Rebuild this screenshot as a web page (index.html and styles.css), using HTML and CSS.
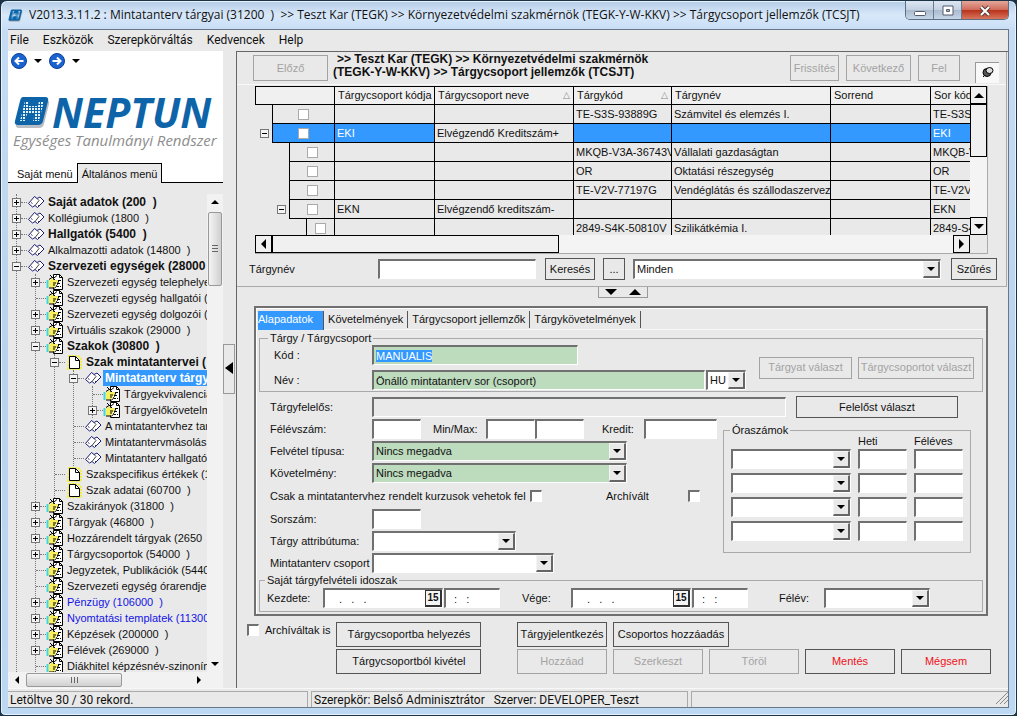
FILE: index.html
```html
<!DOCTYPE html>
<html lang="hu">
<head>
	<meta charset="UTF-8">
	<title>Neptun - Mintatanterv tárgyai</title>
	<link rel="stylesheet" href="styles.css">
</head>
<body>
	<!-- ikonok -->
	<svg class="defs" aria-hidden="true">
		<symbol id="book" viewBox="0 0 18 16">
			<path d="M1.500 9.500 L7.500 2.500 L10 4.500 L13 3 L17 7 L10.500 13.500 L8 11.500 L5.500 13Z" fill="#fff" stroke="#1b1b78"/>
			<path d="M10 4.500 L12 6.500 L8 11.500 M4 8.500 L5.500 9.500 M11 11 L12 12" fill="none" stroke="#444"/>
		</symbol>
		<symbol id="hand" viewBox="0 0 18 16">
			<path d="M7.500 0.500h6l3 3v12h-9z" fill="#fff" stroke="#000"/>
			<path d="M13.500 0.500v3h3M13 6.500h2M12 9.500h2M11 12.500h2M14 12.500h1" fill="none" stroke="#000"/>
			<path d="M1.500 6v8" stroke="#3fd6e0" stroke-width="2"/>
			<path d="M3 6 L6 4.500 L8 6 H12 V8 H11 V10 H10 V12 H9 L7 14 H3Z" fill="#f8ef5e"/>
			<path d="M3 5.500 L6 3.500 M12.500 6v2l-1 1v1.500l-1 1v1l-2 1.500H3M7 9h3M7 11h2" fill="none" stroke="#000"/>
			<path d="M4 1 L9 6 M8 4 L11 1.500" stroke="#000"/>
		</symbol>
		<symbol id="sheet" viewBox="0 0 18 16">
			<path d="M4 2h9l3 3v10H3z" fill="none" stroke="#f3ee3c" stroke-width="2" stroke-dasharray="2 1"/>
			<path d="M4.500 2.500h6l4 4v8h-10z" fill="#fff" stroke="#000"/>
			<path d="M10.500 2.500v4h4" fill="none" stroke="#000"/>
		</symbol>
		<pattern id="dots" width="3" height="3" patternUnits="userSpaceOnUse"><rect width="2" height="2" fill="#e4f2fc"/></pattern>
		<symbol id="mark" viewBox="0 0 36 32">
			<path d="M10 4h22q4 0 3 4l-5 20q-1 4-5 4H5q-4 0-3-4L7 8q1-4 3-4z" fill="#b9bec4"/>
			<path d="M9 1h22q4 0 3 4l-5 20q-1 4-5 4H4q-4 0-3-4L6 5q1-4 3-4z" fill="#0d64a8"/>
			<path d="M11 5h4l-1 5h10l1-5h5l-5 20h-6l2-7h-8l-2 7H6z" fill="url(#dots)"/>
		</symbol>
	</svg>

	<div class="window">
		<header class="titlebar">
			<svg class="app-icon"><use href="#mark"/></svg>
			<h1>V2013.3.11.2 : Mintatanterv tárgyai (31200  )  &gt;&gt; Teszt Kar (TEGK) &gt;&gt; Környezetvédelmi szakmérnök (TEGK-Y-W-KKV) &gt;&gt; Tárgycsoport jellemzők (TCSJT)</h1>
			<div class="win-buttons">
				<button type="button" aria-label="Kis méret"><svg viewBox="0 0 12 12"><rect x="0.500" y="6.500" width="11" height="4" rx="1" fill="#fff" stroke="#555b6b"/></svg></button>
				<button type="button" aria-label="Teljes méret"><svg viewBox="0 0 12 12"><path d="M1 1h10v9H1z M4.500 4.500h3v2h-3z" fill="#fff" fill-rule="evenodd" stroke="#555b6b"/></svg></button>
				<button type="button" class="close" aria-label="Bezárás"><svg viewBox="0 0 12 12"><path d="M2 2 L10 10 M10 2 L2 10" stroke="#5a3a3a" stroke-width="4"/><path d="M2 2 L10 10 M10 2 L2 10" stroke="#fff" stroke-width="2"/></svg></button>
			</div>
		</header>

		<div class="client">
			<nav class="menubar">
				<a href="#">File</a>
				<a href="#">Eszközök</a>
				<a href="#">Szerepkörváltás</a>
				<a href="#">Kedvencek</a>
				<a href="#">Help</a>
			</nav>

			<div class="body">
				<aside class="side">
					<div class="brand">
						<div class="history">
							<button type="button" aria-label="Vissza"><svg viewBox="0 0 16 16"><circle cx="8" cy="8" r="7.500" fill="#1a62d0" stroke="#0b3f9c"/><path d="M12.500 8H4.500M8 4.500L4.500 8L8 11.500" fill="none" stroke="#fff" stroke-width="2"/></svg></button>
							<i class="down"></i>
							<button type="button" aria-label="Előre"><svg viewBox="0 0 16 16"><circle cx="8" cy="8" r="7.500" fill="#1a62d0" stroke="#0b3f9c"/><path d="M3.500 8H11.500M8 4.500L11.500 8L8 11.500" fill="none" stroke="#fff" stroke-width="2"/></svg></button>
							<i class="down"></i>
						</div>
						<div class="logo"><svg><use href="#mark"/></svg><b>NEPTUN</b></div>
						<p class="slogan">Egységes Tanulmányi Rendszer</p>
						<div class="menu-tabs">
							<button type="button">Saját menü</button>
							<button type="button" class="active">Általános menü</button>
						</div>
					</div>

					<div class="tree-box">
						<div class="tree">
							<ul>
								<li><div class="node bold"><button type="button" class="exp plus" aria-label="Kinyit"></button><i></i><svg><use href="#book"/></svg><span>Saját adatok (200  )</span></div></li>
								<li><div class="node"><button type="button" class="exp plus" aria-label="Kinyit"></button><i></i><svg><use href="#book"/></svg><span>Kollégiumok (1800  )</span></div></li>
								<li><div class="node bold"><button type="button" class="exp plus" aria-label="Kinyit"></button><i></i><svg><use href="#book"/></svg><span>Hallgatók (5400  )</span></div></li>
								<li><div class="node"><button type="button" class="exp plus" aria-label="Kinyit"></button><i></i><svg><use href="#book"/></svg><span>Alkalmazotti adatok (14800  )</span></div></li>
								<li><div class="node bold"><button type="button" class="exp" aria-label="Becsuk"></button><i></i><svg><use href="#book"/></svg><span>Szervezeti egységek (28000  )</span></div>
									<ul>
										<li><div class="node"><button type="button" class="exp plus" aria-label="Kinyit"></button><i></i><svg><use href="#hand"/></svg><span>Szervezeti egység telephelyei</span></div></li>
										<li><div class="node leaf"><i></i><svg><use href="#hand"/></svg><span>Szervezeti egység hallgatói (2</span></div></li>
										<li><div class="node"><button type="button" class="exp plus" aria-label="Kinyit"></button><i></i><svg><use href="#hand"/></svg><span>Szervezeti egység dolgozói (2</span></div></li>
										<li><div class="node"><button type="button" class="exp plus" aria-label="Kinyit"></button><i></i><svg><use href="#hand"/></svg><span>Virtuális szakok (29000  )</span></div></li>
										<li><div class="node bold"><button type="button" class="exp" aria-label="Becsuk"></button><i></i><svg><use href="#hand"/></svg><span>Szakok (30800  )</span></div>
											<ul>
												<li><div class="node bold"><button type="button" class="exp" aria-label="Becsuk"></button><i></i><svg><use href="#sheet"/></svg><span>Szak mintatantervei (</span></div>
													<ul>
														<li><div class="node bold selected"><button type="button" class="exp" aria-label="Becsuk"></button><i></i><svg><use href="#book"/></svg><span>Mintatanterv tárgyai</span></div>
															<ul>
																<li><div class="node leaf"><i></i><svg><use href="#hand"/></svg><span>Tárgyekvivalencia</span></div></li>
																<li><div class="node"><button type="button" class="exp plus" aria-label="Kinyit"></button><i></i><svg><use href="#hand"/></svg><span>Tárgyelőkövetelmények</span></div></li>
															</ul>
														</li>
														<li><div class="node leaf"><i></i><svg><use href="#book"/></svg><span>A mintatantervhez tartozó</span></div></li>
														<li><div class="node leaf"><i></i><svg><use href="#book"/></svg><span>Mintatantervmásolás (</span></div></li>
														<li><div class="node leaf"><i></i><svg><use href="#book"/></svg><span>Mintatanterv hallgatói</span></div></li>
													</ul>
												</li>
												<li><div class="node leaf"><i></i><svg><use href="#sheet"/></svg><span>Szakspecifikus értékek (1</span></div></li>
												<li><div class="node leaf"><i></i><svg><use href="#sheet"/></svg><span>Szak adatai (60700  )</span></div></li>
											</ul>
										</li>
										<li><div class="node"><button type="button" class="exp plus" aria-label="Kinyit"></button><i></i><svg><use href="#hand"/></svg><span>Szakirányok (31800  )</span></div></li>
										<li><div class="node"><button type="button" class="exp plus" aria-label="Kinyit"></button><i></i><svg><use href="#hand"/></svg><span>Tárgyak (46800  )</span></div></li>
										<li><div class="node"><button type="button" class="exp plus" aria-label="Kinyit"></button><i></i><svg><use href="#hand"/></svg><span>Hozzárendelt tárgyak (2650  )</span></div></li>
										<li><div class="node"><button type="button" class="exp plus" aria-label="Kinyit"></button><i></i><svg><use href="#hand"/></svg><span>Tárgycsoportok (54000  )</span></div></li>
										<li><div class="node leaf"><i></i><svg><use href="#hand"/></svg><span>Jegyzetek, Publikációk (54400  )</span></div></li>
										<li><div class="node leaf"><i></i><svg><use href="#hand"/></svg><span>Szervezeti egység órarendje (</span></div></li>
										<li><div class="node blue"><button type="button" class="exp plus" aria-label="Kinyit"></button><i></i><svg><use href="#hand"/></svg><span>Pénzügy (106000  )</span></div></li>
										<li><div class="node blue"><button type="button" class="exp plus" aria-label="Kinyit"></button><i></i><svg><use href="#hand"/></svg><span>Nyomtatási templatek (113000  )</span></div></li>
										<li><div class="node"><button type="button" class="exp plus" aria-label="Kinyit"></button><i></i><svg><use href="#hand"/></svg><span>Képzések (200000  )</span></div></li>
										<li><div class="node"><button type="button" class="exp plus" aria-label="Kinyit"></button><i></i><svg><use href="#hand"/></svg><span>Félévek (269000  )</span></div></li>
										<li><div class="node leaf"><i></i><svg><use href="#hand"/></svg><span>Diákhitel képzésnév-szinonímák</span></div></li>
									</ul>
								</li>
							</ul>
						</div>
						<div class="vbar"><i class="up small"></i><div class="thumb"></div><i class="down small"></i></div>
						<div class="hbar"><i class="left small"></i><div class="thumb"></div><i class="right small"></i></div>
					</div>
				</aside>

				<div class="splitter"><button type="button" aria-label="Menü elrejtése"><i class="left"></i></button></div>

				<main>
					<section class="list">
						<div class="path">
							<button type="button" class="btn prev" disabled>Előző</button>
							<h2><span> &gt;&gt; Teszt Kar (TEGK) &gt;&gt; Környezetvédelmi szakmérnök</span><br>(TEGK-Y-W-KKV) &gt;&gt; Tárgycsoport jellemzők (TCSJT)</h2>
							<button type="button" class="btn refresh" disabled>Frissítés</button>
							<button type="button" class="btn next" disabled>Következő</button>
							<button type="button" class="btn parent" disabled>Fel</button>
							<button type="button" class="pin" aria-label="Rögzítés"><svg viewBox="0 0 12 12"><path d="M4 8L1 11" stroke="#000"/><ellipse cx="5" cy="6.500" rx="4" ry="4" fill="#555" stroke="#000"/><ellipse cx="7.500" cy="4.500" rx="3.500" ry="3" fill="#ddd" stroke="#000"/></svg></button>
						</div>

						<div class="grid">
							<div class="grid-view">
								<table>
									<colgroup><col class="c-ind"><col class="c-ind"><col class="c-ind"><col class="c-chk"><col class="c-code"><col class="c-name"><col class="c-subj"><col class="c-title"><col class="c-code"><col class="c-code"></colgroup>
									<thead>
										<tr><th colspan="4"></th><th>Tárgycsoport kódja</th><th>Tárgycsoport neve<em>△</em></th><th>Tárgykód<em>△</em></th><th>Tárgynév</th><th>Sorrend</th><th>Sor kódja</th></tr>
									</thead>
									<tbody>
										<tr><td class="gap"></td><td colspan="3" class="chk"><input type="checkbox" aria-label="Kijelöl"></td><td></td><td></td><td>TE-S3S-93889G</td><td>Számvitel és elemzés I.</td><td></td><td>TE-S3S-93889G</td></tr>
										<tr class="current"><td class="gap"><button type="button" class="exp" aria-label="Becsuk"></button></td><td colspan="3" class="chk"><input type="checkbox" aria-label="Kijelöl"></td><td>EKI</td><td class="plain">Elvégzendő Kreditszám+</td><td></td><td></td><td></td><td>EKI</td></tr>
										<tr><td class="gap"></td><td class="gap"></td><td colspan="2" class="chk"><input type="checkbox" aria-label="Kijelöl"></td><td></td><td></td><td>MKQB-V3A-36743V</td><td>Vállalati gazdaságtan</td><td></td><td>MKQB-V3A</td></tr>
										<tr><td class="gap"></td><td class="gap"></td><td colspan="2" class="chk"><input type="checkbox" aria-label="Kijelöl"></td><td></td><td></td><td>OR</td><td>Oktatási részegység</td><td></td><td>OR</td></tr>
										<tr><td class="gap"></td><td class="gap"></td><td colspan="2" class="chk"><input type="checkbox" aria-label="Kijelöl"></td><td></td><td></td><td>TE-V2V-77197G</td><td>Vendéglátás és szállodaszervezés</td><td></td><td>TE-V2V-77197G</td></tr>
										<tr><td class="gap"></td><td class="gap"><button type="button" class="exp" aria-label="Becsuk"></button></td><td colspan="2" class="chk"><input type="checkbox" aria-label="Kijelöl"></td><td>EKN</td><td>Elvégzendő kreditszám-</td><td></td><td></td><td></td><td>EKN</td></tr>
										<tr><td class="gap"></td><td class="gap"></td><td class="gap"></td><td class="chk"><input type="checkbox" aria-label="Kijelöl"></td><td></td><td></td><td>2849-S4K-50810V</td><td>Szilikátkémia I.</td><td></td><td>2849-S4K</td></tr>
									</tbody>
								</table>
							</div>
							<div class="grid-vbar"><button type="button" aria-label="Fel"><i class="up"></i></button><div class="thumb"></div><button type="button" aria-label="Le"><i class="down"></i></button></div>
							<div class="grid-hbar"><button type="button" aria-label="Balra"><i class="left"></i></button><div class="thumb"></div><button type="button" aria-label="Jobbra"><i class="right"></i></button></div>
						</div>

						<div class="filter">
							<label for="search">Tárgynév</label>
							<input type="text" id="search">
							<button type="button" class="btn find">Keresés</button>
							<button type="button" class="btn dots">...</button>
							<span class="combo"><select aria-label="Szűrő"><option>Minden</option></select></span>
							<button type="button" class="btn">Szűrés</button>
						</div>
					</section>

					<div class="toggle"><button type="button" aria-label="Le"><i class="down"></i></button><button type="button" aria-label="Fel"><i class="up"></i></button></div>

					<section class="details">
						<div class="tabs">
							<button type="button" class="active">Alapadatok</button>
							<button type="button">Követelmények</button>
							<button type="button">Tárgycsoport jellemzők</button>
							<button type="button">Tárgykövetelmények</button>
						</div>

						<form>
							<fieldset class="subject">
								<legend>Tárgy / Tárgycsoport</legend>
								<div class="subject-fields">
									<div class="row"><label for="code">Kód :</label><span class="field"><input type="text" id="code" class="green" value="MANUALIS"></span></div>
									<div class="row"><label for="name">Név :</label><input type="text" id="name" class="green" value="Önálló mintatanterv sor (csoport)"><span class="combo w-lang"><select aria-label="Nyelv"><option>HU</option></select></span></div>
								</div>
								<button type="button" class="btn" disabled>Tárgyat választ</button>
								<button type="button" class="btn wide" disabled>Tárgycsoportot választ</button>
							</fieldset>

							<div class="row resp"><label for="resp">Tárgyfelelős:</label><input type="text" id="resp" class="readonly" readonly><button type="button" class="btn">Felelőst választ</button></div>

							<div class="columns">
								<div class="fields">
									<div class="row"><label for="term">Félévszám:</label><input type="text" id="term" class="w-num"><label for="min" class="minmax">Min/Max:</label><input type="text" id="min" class="w-num"><input type="text" class="w-num" aria-label="Max"><label for="credit" class="credit">Kredit:</label><input type="text" id="credit" class="w-credit"></div>
									<div class="row"><label for="type">Felvétel típusa:</label><span class="combo green w-type"><select id="type"><option>Nincs megadva</option></select></span></div>
									<div class="row"><label for="req">Követelmény:</label><span class="combo green w-type"><select id="req"><option>Nincs megadva</option></select></span></div>
									<div class="row checks"><label for="only">Csak a mintatantervhez rendelt kurzusok vehetok fel</label><input type="checkbox" id="only"><label for="arch" class="arch">Archívált</label><input type="checkbox" id="arch"></div>
									<div class="row"><label for="ord">Sorszám:</label><input type="text" id="ord" class="w-num"></div>
									<div class="row"><label for="attr">Tárgy attribútuma:</label><span class="combo w-attr"><select id="attr"><option></option></select></span></div>
									<div class="row"><label for="group">Mintatanterv csoport</label><span class="combo w-group"><select id="group"><option></option></select></span></div>
								</div>

								<fieldset class="hours">
									<legend>Óraszámok</legend>
									<div class="hours-grid">
										<b></b><b>Heti</b><b>Féléves</b>
										<span class="combo"><select aria-label="Óratípus 1"><option></option></select></span><input type="text" aria-label="Heti 1"><input type="text" aria-label="Féléves 1">
										<span class="combo"><select aria-label="Óratípus 2"><option></option></select></span><input type="text" aria-label="Heti 2"><input type="text" aria-label="Féléves 2">
										<span class="combo"><select aria-label="Óratípus 3"><option></option></select></span><input type="text" aria-label="Heti 3"><input type="text" aria-label="Féléves 3">
										<span class="combo"><select aria-label="Óratípus 4"><option></option></select></span><input type="text" aria-label="Heti 4"><input type="text" aria-label="Féléves 4">
									</div>
								</fieldset>
							</div>

							<fieldset class="period">
								<legend>Saját tárgyfelvételi idoszak</legend>
								<label for="from">Kezdete:</label>
								<span class="date"><input type="text" id="from" value=".   .   ."><button type="button">15</button></span>
								<input type="text" class="time" value=":   :" aria-label="Kezdete idő">
								<label for="to" class="to">Vége:</label>
								<span class="date"><input type="text" id="to" value=".   .   ."><button type="button">15</button></span>
								<input type="text" class="time" value=":   :" aria-label="Vége idő">
								<label for="sem" class="sem">Félév:</label>
								<span class="combo"><select id="sem"><option></option></select></span>
							</fieldset>
						</form>
					</section>

					<div class="actions">
						<div class="archived"><input type="checkbox" id="archived"><label for="archived">Archíváltak is</label></div>
						<div class="stack">
							<button type="button" class="btn">Tárgycsoportba helyezés</button>
							<button type="button" class="btn">Tárgycsoportból kivétel</button>
						</div>
						<div class="edit">
							<div><button type="button" class="btn">Tárgyjelentkezés</button><button type="button" class="btn group-add">Csoportos hozzáadás</button></div>
							<div>
								<button type="button" class="btn" disabled>Hozzáad</button>
								<button type="button" class="btn" disabled>Szerkeszt</button>
								<button type="button" class="btn" disabled>Töröl</button>
								<button type="button" class="btn red">Mentés</button>
								<button type="button" class="btn red">Mégsem</button>
							</div>
						</div>
					</div>
				</main>
			</div>

			<footer class="status">
				<span class="records">Letöltve 30 / 30 rekord.</span>
				<span class="role">Szerepkör: Belső Adminisztrátor   Szerver: DEVELOPER_Teszt</span>
				<span class="rest"><svg viewBox="0 0 12 12"><path d="M0 12L12 0M4 12L12 4M8 12L12 8" stroke="#888"/></svg></span>
			</footer>
		</div>
	</div>

	<script>
		// a kód mező kijelölve nyílik meg
		var code = document.getElementById("code");
		code.focus();
		code.select();
	</script>
</body>
</html>
```
FILE: styles.css
```css
*, *::before, *::after{
	box-sizing: border-box;
	margin: 0;
	padding: 0;
}
body{
	font: 11px/13px "Liberation Sans", Arial, sans-serif;
	color: #111;
	background: #1c3345;
}
button, input, select{
	font: inherit;
	color: inherit;
	border-radius: 0;
	outline: none;
}
button{
	border: none;
	background: none;
}
.defs{
	position: absolute;
	width: 0;
	height: 0;
}

/* window */
.window{
	min-height: 100vh;
	display: flex;
	flex-direction: column;
	padding: 0 7px 7px;
	border: 1px solid #1c3345;
	border-radius: 7px 7px 5px 5px;
	background: linear-gradient(#b4cce6, #d8e8f9 14px, #c6dcf5 30px, #b9d3ee 50%, #bdd8f3);
	box-shadow: inset 0 0 0 1px #e6f2fd;
}
.titlebar{
	height: 28px;
	display: flex;
	align-items: center;
}
.app-icon{
	width: 15px;
	height: 13px;
	margin-right: 6px;
}
.titlebar h1{
	flex: 1;
	font: 12px/16px "Open Sans", sans-serif;
	white-space: pre;
	overflow: hidden;
}
.win-buttons{
	display: flex;
	align-self: flex-start;
	border: 1px solid #5d6f85;
	border-top: none;
	border-radius: 0 0 5px 5px;
	overflow: hidden;
}
.win-buttons button{
	width: 28px;
	height: 18px;
	background: linear-gradient(#dbe6f2, #c3d0e0 50%, #a9bace 50%, #c5d6e8);
	border-right: 1px solid #6a7b90;
}
.win-buttons .close{
	width: 46px;
	border: none;
	background: linear-gradient(#e3a79b, #cf6a58 50%, #b8301a 50%, #d7765c);
}
.win-buttons svg{
	width: 12px;
	height: 12px;
	vertical-align: middle;
}
.client{
	flex: 1;
	display: flex;
	flex-direction: column;
	border: 1px solid #68788a;
	border-left: none;
	background: #e9e9e9;
}
.menubar{
	height: 21px;
	display: flex;
	gap: 14px;
	padding: 0 2px;
	font: 12px/20px Roboto, sans-serif;
}
.menubar a{
	color: #111;
	text-decoration: none;
}
.body{
	flex: 1;
	display: flex;
}

/* arrows */
.up, .down, .left, .right{
	display: inline-block;
	border: 5px solid transparent;
}
.small{ border-width: 4px; }
.down{ border-top-color: #000; border-bottom: none; }
.up{ border-bottom-color: #000; border-top: none; }
.left{ border-right-color: #000; border-left: none; }
.right{ border-left-color: #000; border-right: none; }

/* side */
.side{
	width: 215px;
	display: flex;
	flex-direction: column;
}
.brand{
	background: #fff;
}
.history{
	height: 20px;
	display: flex;
	align-items: center;
	gap: 7px;
	padding-left: 3px;
}
.history svg{
	display: block;
	width: 16px;
	height: 16px;
}
.history .down{
	border-width: 4px;
	border-bottom: none;
}
.logo{
	display: flex;
	align-items: center;
	height: 40px;
	margin-top: 21px;
	padding-left: 6px;
	color: #0d64a8;
}
.logo svg{
	flex: none;
	width: 36px;
	height: 32px;
}
.logo b{
	font: italic bold 41px/40px "Open Sans", sans-serif;
	margin-left: 2px;
}
.slogan{
	padding-left: 5px;
	font: italic 15px/16px "Open Sans", sans-serif;
	color: #8d8d8d;
	white-space: nowrap;
}
.menu-tabs{
	display: flex;
	margin-top: 15px;
	border-bottom: 1px solid #000;
}
.menu-tabs button{
	height: 19px;
	padding: 3px 4px 0;
	margin-left: 5px;
}
.menu-tabs .active{
	height: 20px;
	margin: 0 0 -1px;
	padding: 1px 4px 0;
	border: 1px solid #000;
	border-bottom: none;
	background: #e9e9e9;
}
.tree-box{
	flex: 1;
	display: grid;
	grid-template: 1fr 16px / 1fr 16px;
	padding-top: 11px;
}
.tree{
	height: 0;
	min-height: 100%;
	min-width: 0;
	overflow: hidden;
}
.tree ul{
	list-style: none;
	border-left: 1px dotted #777;
	margin-left: 18px;
}
.tree > ul{
	margin-left: 8px;
}
.node{
	display: flex;
	align-items: center;
	height: 16px;
	margin-left: -5px;
	white-space: pre;
}
.node i{
	flex: none;
	width: 6px;
	border-top: 1px dotted #777;
}
.node.leaf{
	margin-left: 0;
}
.leaf i{
	width: 10px;
}
.node svg{
	flex: none;
	width: 18px;
	height: 16px;
	margin-right: 1px;
}
.node span{
	padding: 0 2px;
	line-height: 16px;
}
.bold{
	font-weight: bold;
	font-size: 12px;
}
.selected span{
	background: #3399ff;
	color: #fff;
}
.blue{
	color: #1414e6;
}
.exp{
	flex: none;
	width: 9px;
	height: 9px;
	border: 1px solid #777;
	background: linear-gradient(#000, #000) center / 5px 1px no-repeat, #f4f4f4;
}
.plus{
	background: linear-gradient(#000, #000) center / 5px 1px no-repeat, linear-gradient(#000, #000) center / 1px 5px no-repeat, #f4f4f4;
}
.vbar, .hbar{
	display: flex;
	align-items: center;
	background: #f2f2f2;
}
.vbar{
	flex-direction: column;
	padding: 6px 0;
}
.vbar .thumb{
	width: 14px;
	height: 74px;
	margin: 8px 0 auto;
	border: 1px solid #999;
	border-radius: 2px;
	background: linear-gradient(#666, #666) center 32px / 6px 1px no-repeat, linear-gradient(#666, #666) center 35px / 6px 1px no-repeat, linear-gradient(#666, #666) center 38px / 6px 1px no-repeat, linear-gradient(90deg, #f4f4f4, #d0d0d0);
}
.hbar{
	grid-column: 1 / -1;
	padding: 0 22px 0 7px;
}
.hbar .thumb{
	width: 96px;
	height: 14px;
	margin: 0 auto 0 7px;
	border: 1px solid #999;
	border-radius: 2px;
	background: linear-gradient(#666, #666) 44px center / 1px 6px no-repeat, linear-gradient(#666, #666) 47px center / 1px 6px no-repeat, linear-gradient(#666, #666) 50px center / 1px 6px no-repeat, linear-gradient(#f4f4f4, #d0d0d0);
}
.splitter{
	width: 13px;
	padding-top: 293px;
}
.splitter button{
	display: block;
	width: 12px;
	height: 50px;
	border: 1px solid #999;
}
.splitter .left{
	border-width: 6px 8px 6px 0;
}

/* shared controls */
.btn{
	height: 22px;
	padding: 0 5px;
	border: 1px solid #555;
	white-space: nowrap;
}
.btn:disabled{
	color: #a3a3a3;
	border-color: #a3a3a3;
}
input[type="text"], .combo{
	height: 20px;
	border: 2px solid;
	border-color: #707070 #fff #fff #707070;
	border-right-width: 1px;
	border-bottom-width: 1px;
	background: #fff;
}
input[type="text"]{
	min-width: 0;
	padding: 0 2px;
}
input[type="text"].green, .combo.green{
	background: #bddbbd;
}
input[type="text"].readonly{
	background: #e9e9e9;
}
input::selection{
	background: #3399ff;
	color: #fff;
}
.combo{
	position: relative;
	display: inline-block;
}
.combo select{
	appearance: none;
	display: block;
	width: 100%;
	height: 100%;
	padding: 0 14px 0 2px;
	border: none;
	background: none;
}
.combo::before{
	content: "";
	position: absolute;
	top: 0;
	right: 0;
	width: 17px;
	height: 100%;
	border: 1px solid;
	border-color: #f4f4f4 #666 #666 #f4f4f4;
	border-right-width: 2px;
	border-bottom-width: 2px;
	background: #e9e9e9;
}
.combo::after{
	content: "";
	position: absolute;
	top: 6px;
	right: 5px;
	border: 4px solid transparent;
	border-top-color: #000;
	border-bottom: none;
}
input[type="checkbox"]{
	appearance: none;
	width: 12px;
	height: 12px;
	border: 2px solid;
	border-color: #707070 #fff #fff #707070;
	border-right-width: 1px;
	border-bottom-width: 1px;
	background: #fff;
}

/* list */
main{
	flex: 1;
	min-width: 0;
	display: flex;
	flex-direction: column;
	border: 1px solid #666;
	border-width: 1px 0 0 1px;
}
.list{
	margin-right: 1px;
	border-right: 1px solid #aaa;
	border-bottom: 1px solid #aaa;
}
.path{
	display: flex;
	padding: 3px 7px 0 16px;
	height: 33px;
	border-bottom: 1px solid #f8f8f8;
}
.path .btn{
	height: 26px;
	margin-left: 7px;
	padding: 0;
}
.path .btn.prev{
	width: 75px;
	margin: 0;
}
.path .refresh{
	width: 49px;
}
.path .next{
	width: 65px;
}
.path .parent{
	width: 42px;
}
.path h2{
	flex: 1;
	margin: -2px 0 0 5px;
	font-size: 12px;
	line-height: 13px;
}
.path h2 span{
	margin-left: 4px;
}
.pin{
	width: 24px;
	height: 21px;
	margin: 7px 0 0 15px;
	border: 1px solid #999;
	border-width: 1px 0 0 1px;
	background: #f8f8f8;
}
.pin svg{
	width: 12px;
	height: 12px;
}
.grid{
	display: grid;
	grid-template: 149px 18px / minmax(0, 1fr) 17px;
	margin: 1px 18px 0;
	border: 1px solid #aaa;
	border-width: 0 1px 1px 0;
}
.grid-view{
	overflow: hidden;
}
.grid table{
	width: 775px;
	table-layout: fixed;
	border-collapse: collapse;
}
.c-ind{ width: 17px; }
.c-chk{ width: 28px; }
.c-code{ width: 100px; }
.c-name{ width: 139px; }
.c-subj{ width: 98px; }
.c-title{ width: 159px; }
.grid th, .grid td{
	height: 19px;
	padding: 0 2px;
	border: 1px solid #000;
	font-weight: normal;
	text-align: left;
	white-space: nowrap;
	overflow: hidden;
}
.grid th{
	height: 18px;
	padding: 0 3px;
	background: #f0f0f0;
}
.grid th em{
	float: right;
	font: 9px/13px "DejaVu Sans", sans-serif;
	color: #888;
}
.grid td.gap{
	border: none;
	padding: 0 0 0 4px;
}
.grid .exp{
	display: block;
}
.grid td.chk{
	text-align: center;
}
.grid td input{
	display: block;
	width: 11px;
	height: 11px;
	margin: 0 auto;
	border: 1px solid #aaa;
}
.current td{
	background: #3399ff;
	color: #fff;
}
.current td.gap, .current td.plain{
	background: #e9e9e9;
	color: #111;
}
.grid-vbar{
	display: flex;
	flex-direction: column;
	background: #f4f4f4;
}
.grid-vbar button, .grid-hbar button, .grid-vbar .thumb, .grid-hbar .thumb{
	width: 17px;
	height: 18px;
	border: 1px solid #000;
	background: #f0f0f0;
}
.grid-vbar button, .grid-hbar button{
	display: flex;
	align-items: center;
	justify-content: center;
}
.grid-vbar .thumb{
	height: 53px;
	margin-bottom: auto;
}
.grid-hbar{
	display: flex;
	background: #f4f4f4;
}
.grid-hbar .thumb{
	width: 287px;
	margin-right: auto;
}
.filter{
	display: flex;
	align-items: center;
	padding: 4px 9px 6px 12px;
}
.filter label{
	width: 129px;
}
.filter input{
	width: 158px;
	margin-right: 9px;
}
.filter .find{
	width: 50px;
	padding: 0;
}
.filter .dots{
	width: 22px;
	margin: 0 8px;
}
.filter .combo{
	flex: 1;
	margin-right: 10px;
}
.toggle{
	display: flex;
	align-self: center;
	height: 11px;
	border: 1px solid #999;
	border-top: none;
}
.toggle button{
	display: flex;
	align-items: center;
	justify-content: center;
	width: 24px;
}
.toggle .down{
	border-width: 6px 6px 0;
}
.toggle .up{
	border-width: 0 6px 6px;
}

/* details */
.details{
	margin: 8px 20px 0 17px;
	border: 2px solid #707070;
	box-shadow: inset 1px 1px #fff;
}
.tabs{
	display: flex;
	padding: 3px 2px 0;
	border-bottom: 1px solid #f8f8f8;
}
.tabs button{
	height: 17px;
	padding: 0 4px;
	border-right: 1px solid #555;
}
.tabs .active{
	height: 19px;
	margin-bottom: -1px;
	padding: 0 10px 3px 0;
	background: #3399ff;
	color: #fff;
}
form{
	padding: 2px 3px;
}
fieldset{
	border: 1px solid #aaa;
	min-width: 0;
}
legend{
	margin-left: 8px;
	padding: 0 2px;
}
.subject{
	display: flex;
	align-items: center;
	padding: 0 8px 1px 0;
}
.subject .btn{
	width: 93px;
	margin-left: 6px;
	padding: 0;
}
.subject .btn.wide{
	width: 116px;
}
.subject-fields{
	flex: 1;
	display: grid;
	gap: 5px;
	padding-right: 7px;
}
.row{
	display: flex;
	align-items: center;
	height: 22px;
}
.row label:first-child{
	width: 102px;
}
.subject .row{
	height: 20px;
	padding-left: 14px;
}
.subject .row label:first-child{
	width: 98px;
}
.field{
	width: 206px;
}
.field input[type="text"]{
	display: block;
	width: 100%;
}
#name{
	flex: 1;
}
.w-lang{
	width: 40px;
	margin-left: 1px;
}
.resp{
	margin-top: 4px;
	padding: 0 25px 0 11px;
}
.resp input{
	flex: 1;
}
.resp .btn{
	width: 162px;
	margin-left: 10px;
}
.columns{
	display: flex;
	align-items: flex-start;
	justify-content: space-between;
	padding: 0 12px 0 11px;
}
.w-num{ width: 49px; }
.w-credit{ width: 73px; }
.w-type{ width: 255px; }
.w-attr{ width: 144px; }
.w-group{ width: 182px; }
.minmax{ width: 65px; padding-left: 12px; }
.credit{ width: 60px; padding-left: 18px; }
.checks{
	height: 24px;
}
.row.checks label:first-child{
	width: 260px;
}
.arch{
	width: 146px;
	padding-left: 64px;
}
.hours{
	width: 248px;
	margin-top: 6px;
	padding: 0 7px 11px;
}
.hours legend{
	margin-left: -1px;
}
.hours-grid{
	display: grid;
	grid-template-columns: 1fr 49px 49px;
	gap: 4px 7px;
}
.hours-grid b{
	font-weight: normal;
	line-height: 8px;
}
.period{
	display: flex;
	align-items: center;
	padding: 1px 52px 3px 7px;
}
.period legend{
	margin-left: -2px;
}
.period label{
	width: 56px;
}
.period .to{
	width: 71px;
	padding-left: 22px;
}
.date{
	position: relative;
	width: 120px;
	margin-right: 1px;
}
.date input[type="text"]{
	display: block;
	width: 100%;
	padding-left: 14px;
}
.date button{
	position: absolute;
	top: 2px;
	right: 1px;
	width: 17px;
	height: 17px;
	border: 1px solid #333;
	border-width: 1px 2px 2px 1px;
	background: #f4f4f4;
	font-weight: bold;
	font-size: 10px;
	line-height: 12px;
}
input[type="text"].time{
	width: 56px;
	padding-left: 8px;
}
.period .sem{
	margin-left: auto;
	width: 45px;
}
.period .combo{
	width: 106px;
}

/* actions */
.actions{
	display: flex;
	justify-content: space-between;
	padding: 6px 17px 0 10px;
}
.actions .btn{
	height: 25px;
	padding: 0;
}
.archived{
	display: flex;
	gap: 6px;
	padding-top: 2px;
}
.stack{
	width: 145px;
	margin: 0 auto 0 6px;
	display: grid;
	gap: 2px;
}
.edit{
	display: grid;
	gap: 2px;
}
.edit div{
	display: flex;
	gap: 6px;
}
.edit .btn{
	width: 90px;
}
.edit .btn.group-add{
	width: 116px;
}
.btn.red{
	color: #f01020;
}

/* status */
.status{
	display: flex;
	gap: 3px;
	height: 19px;
	padding-top: 2px;
	border-top: 1px solid #f8f8f8;
	font: 12px/16px Roboto, sans-serif;
	white-space: pre;
}
.status span{
	border: 1px solid #aaa;
	border-width: 1px 1px 0 0;
	padding-left: 2px;
}
.status .records{
	width: 300px;
}
.status .role{
	width: 377px;
	border-left-width: 1px;
}
.status .rest{
	flex: 1;
	border-left-width: 1px;
	border-right: none;
	text-align: right;
}
.status svg{
	width: 12px;
	height: 12px;
}
```
